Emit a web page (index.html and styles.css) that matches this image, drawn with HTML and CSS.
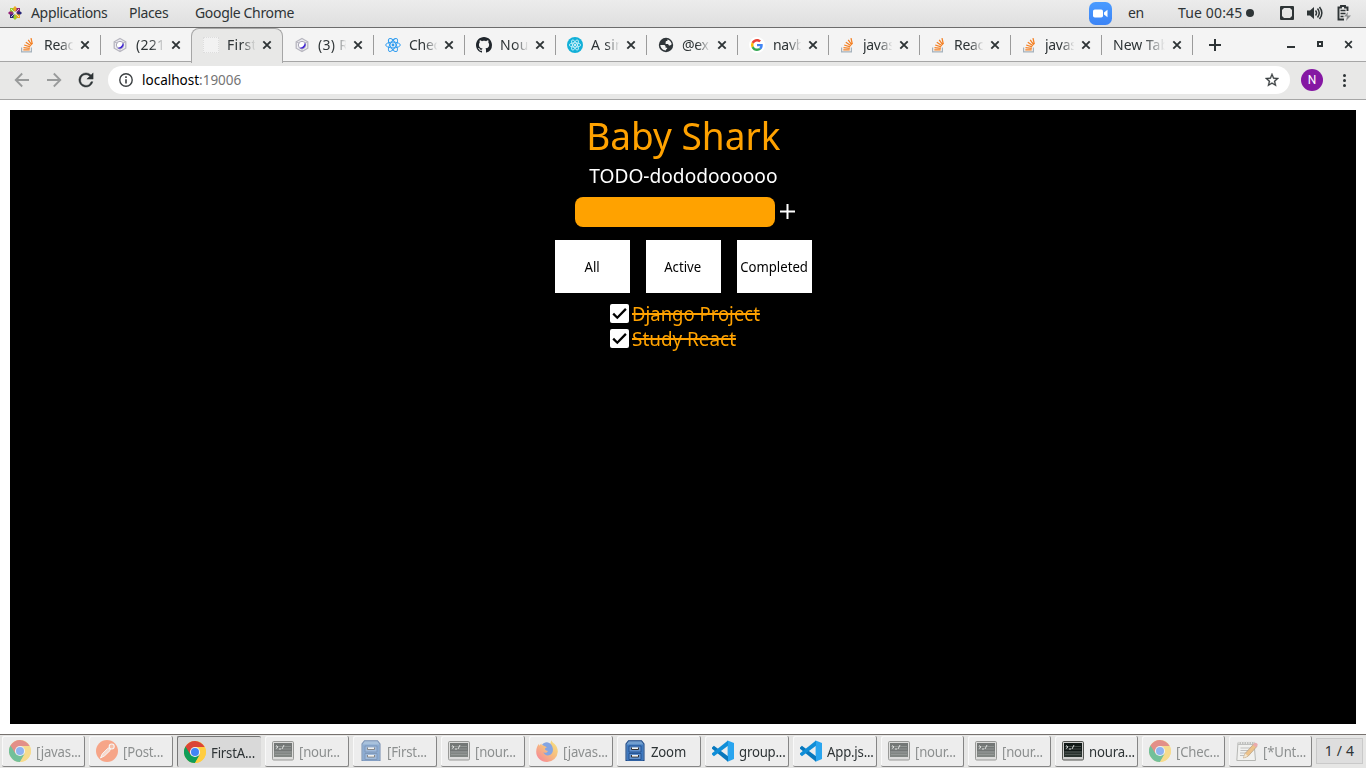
FILE: index.html
```html
<!DOCTYPE html>
<html lang="en">
<head>
<meta charset="utf-8">
<title>FirstApp</title>
<link rel="stylesheet" href="styles.css">
</head>
<body>
<svg class="defs" width="0" height="0">
  <defs>
    <linearGradient id="zoomblue" x2="0" y2="1"><stop offset="0" stop-color="#4a9bff"/><stop offset="1" stop-color="#3c84f6"/></linearGradient>
    <linearGradient id="fox" x1="1" x2="0.1" y1="0" y2="1"><stop offset="0" stop-color="#ffe226"/><stop offset=".5" stop-color="#ff9426"/><stop offset="1" stop-color="#ff2d55"/></linearGradient>
  </defs>
  <symbol id="so" viewBox="0 0 16 16"><path d="M1.600 10.500v4.300h9.800v-4.300" fill="none" stroke="#a5b1bb" stroke-width="1.200"/><path d="M3.300 12.900h6.400M3.500 10.600l6.300.7M4.200 8l6 1.900M5.800 5.200l5.200 3.500M8.200 2.900l3.600 5M11 1.200l1.300 5.900" fill="none" stroke="#f48024" stroke-width="1.300"/></symbol>
  <symbol id="hex" viewBox="0 0 16 16"><path d="M8 1.500l5.800 3.300v6.400L8 14.500l-5.800-3.300V4.800z" fill="#eeeef2" stroke="#b7b6bf" stroke-width="1.300"/><circle cx="8" cy="8" r="3.700" fill="#fff" stroke="#a9a6b8"/><path d="M11 5.600a4 4 0 0 1-5.500 5.400l2.800-.9 1.700-1.800z" fill="#3e22d6"/><path d="M2.500 5l3 1.200M8 14v-2.500M13.500 5l-2.800 1" stroke="#b7b6bf"/></symbol>
  <symbol id="react" viewBox="0 0 16 16"><g fill="none" stroke="currentColor" stroke-width=".95"><ellipse cx="8" cy="8" rx="7.300" ry="2.900"/><ellipse cx="8" cy="8" rx="7.300" ry="2.900" transform="rotate(60 8 8)"/><ellipse cx="8" cy="8" rx="7.300" ry="2.900" transform="rotate(120 8 8)"/></g><circle cx="8" cy="8" r="1.400" fill="currentColor"/></symbol>
  <symbol id="github" viewBox="0 0 16 16"><path fill="#20262c" d="M8 0C3.58 0 0 3.58 0 8c0 3.54 2.29 6.53 5.47 7.59.4.07.55-.17.55-.38 0-.19-.01-.82-.01-1.49-2.01.37-2.53-.49-2.69-.94-.09-.23-.48-.94-.82-1.13-.28-.15-.68-.52-.01-.53.63-.01 1.08.58 1.23.82.72 1.21 1.87.87 2.33.66.07-.52.28-.87.51-1.07-1.78-.2-3.64-.89-3.64-3.95 0-.87.31-1.59.82-2.15-.08-.2-.36-1.02.08-2.12 0 0 .67-.21 2.2.82.64-.18 1.32-.27 2-.27s1.36.09 2 .27c1.53-1.04 2.2-.82 2.2-.82.44 1.1.16 1.92.08 2.12.51.56.82 1.27.82 2.15 0 3.07-1.87 3.75-3.65 3.95.29.25.54.73.54 1.48 0 1.07-.01 1.93-.01 2.2 0 .21.15.46.55.38A8 8 0 0 0 16 8c0-4.42-3.58-8-8-8z"/></symbol>
  <symbol id="reactdisc" viewBox="0 0 16 16"><circle cx="8" cy="8" r="8" fill="#12b0d8"/><g fill="none" stroke="#e4faff" stroke-width=".75"><ellipse cx="8" cy="8" rx="5.700" ry="2.200"/><ellipse cx="8" cy="8" rx="5.700" ry="2.200" transform="rotate(60 8 8)"/><ellipse cx="8" cy="8" rx="5.700" ry="2.200" transform="rotate(120 8 8)"/></g><circle cx="8" cy="8" r="1" fill="#fff"/></symbol>
  <symbol id="globe" viewBox="0 0 16 16"><circle cx="8" cy="8" r="7.200" fill="#30363a"/><path d="M2.300 8.100h3.400c1 0 1.900.7 1.900 1.600v1h1.500v1.400c-.9 0-1.200.6-1.200 1.500-3-.2-5.400-2.500-5.600-5.500zM9.300 2.400c2.200.5 3.900 2.200 4.400 4.600-.3.900-1 1.400-2 1.400-.9 0-1.500-.6-1.500-1.500H7.600V5.400c0-.8.600-1.300 1.300-1.300.5 0 .6-.8.400-1.700z" fill="#f4f4f4"/></symbol>
  <symbol id="google" viewBox="0 0 48 48"><rect width="48" height="48" rx="24" fill="#fff"/><g transform="translate(6 6) scale(.75)"><path fill="#EA4335" d="M24 9.500c3.540 0 6.710 1.220 9.210 3.600l6.850-6.850C35.900 2.380 30.470 0 24 0 14.620 0 6.510 5.380 2.560 13.220l7.980 6.190C12.430 13.720 17.740 9.500 24 9.500z"/><path fill="#4285F4" d="M46.980 24.550c0-1.570-.15-3.090-.38-4.550H24v9.020h12.940c-.58 2.960-2.260 5.480-4.780 7.180l7.730 6c4.510-4.180 7.090-10.360 7.090-17.650z"/><path fill="#FBBC05" d="M10.530 28.590A14.500 14.500 0 0 1 10.530 19.410l-7.980-6.190a24 24 0 0 0 0 21.560z"/><path fill="#34A853" d="M24 48c6.480 0 11.930-2.130 15.890-5.810l-7.730-6c-2.150 1.450-4.920 2.300-8.160 2.300-6.260 0-11.570-4.220-13.470-9.910l-7.980 6.190C6.510 42.620 14.620 48 24 48z"/></g></symbol>
  <symbol id="x" viewBox="0 0 10 10"><path d="M1.300 1.300l7.400 7.400M8.700 1.300l-7.400 7.400" stroke="#2e3436" stroke-width="1.900" fill="none"/></symbol>
  <symbol id="chrome" viewBox="0 0 22 22"><circle cx="11" cy="11" r="11" fill="#ffcd40"/><path d="M11 11L1.470 5.500A11 11 0 0 0 11 22l5-8z" fill="#0f9d58"/><path d="M1.470 5.500A11 11 0 0 1 20.500 5.700V6H11v5l-4.600 2.500z" fill="#db4437"/><path d="M11 6h9.700A11 11 0 0 1 11 22l4.800-8.500z" fill="#ffcd40"/><circle cx="11" cy="11" r="5.100" fill="#f1f1f1"/><circle cx="11" cy="11" r="4" fill="#4285f4"/></symbol>
  <symbol id="postman" viewBox="0 0 22 22"><circle cx="11" cy="11" r="11" fill="#ff6c37"/><path d="M4.500 18l1.800-4.200 5.600-5.600 2.300 2.200-5.500 5.300-4.200 2.300zM12.500 7.500l2.300 2.300" fill="#ffc9b4" stroke="#fff" stroke-width="1"/><circle cx="15.700" cy="6.500" r="2.500" fill="#ff9a73" stroke="#fff" stroke-width="1.100"/></symbol>
  <symbol id="term" viewBox="0 0 22 20"><rect x=".5" y=".5" width="21" height="18.500" rx="1.200" fill="#d0d0cf" stroke="#555753"/><rect x="2" y="2" width="18" height="14" fill="#101816"/><path d="M2 10h18v6H2z" fill="#29322e"/><path d="M3 5.500h16M3 8h16M3 11h16M3 13.500h16" stroke="#5b635f" stroke-width=".7"/><path d="M4 4.500l2 1.500-2 1.500M7 8h2M10 8l2-4" fill="none" stroke="#fff" stroke-width=".8"/></symbol>
  <symbol id="cabinet" viewBox="0 0 20 22"><path d="M3.500.7h13L19 4v16.500H1V4z" fill="#729fcf" stroke="#204a87" stroke-width="1.100"/><path d="M2 4.500h16v16H2z" fill="#3e78bf"/><path d="M4 6h12v6H4zM4 13.500h12v6H4z" fill="#6192ce" stroke="#214f8c" stroke-width=".9"/><path d="M6.500 7.500v2h7v-2M6.500 15v2h7v-2" fill="#d7d7d0" stroke="#333" stroke-width="1"/><path d="M7 8.300h6M7 15.800h6" stroke="#fff" stroke-width="1"/></symbol>
  <symbol id="firefox" viewBox="0 0 22 22"><path d="M15.200.3c1.100 1.900 2 2.500 3.600 4 2 2 3.100 4.600 3 7.500A10.800 10.800 0 0 1 11 22C4.900 22 .2 17.600.2 11.700c0-3.600 1.300-6.200 2.800-7.900l.3 2 2-2.300.5 1.700c4-1 7-.5 8 .6z" fill="url(#fox)"/><path d="M6 4.800C8 1.500 13 1 15.500 5c2.400 3.800 1.700 8-1.100 9.700-3 1.700-6 .3-7.100-2.500 2.400 1.300 4 .3 4.600-1.200-1.400-.3-3-.6-3-2.500l2-1.200z" fill="#306bdb"/></symbol>
  <symbol id="vscode" viewBox="0 0 22 22"><path d="M15.600.4L22 3v16l-6.400 2.700z" fill="#29a5ef"/><path d="M0 7.400l1.900-1.700L16 16.300v5.400L0 8.700z" fill="#0878bd"/><path d="M0 14.600l1.900 1.700L16 5.700V.4L0 13.300z" fill="#108ed8"/></symbol>
  <symbol id="notes" viewBox="0 0 22 22"><path d="M2 2.500h16l1.500 18H.8z" fill="#f5f5f2" stroke="#888a85"/><path d="M2 2h17v3H2z" fill="#9b9c98"/><path d="M3 1v3M5.500 1v3M8 1v3M10.500 1v3M13 1v3M15.500 1v3M18 1v3" stroke="#e3e3e0"/><path d="M4.500 8h11M4.500 10.500h9M4 13h7M4 15.500h4" stroke="#999"/><path d="M7.500 18l1.700-4.600L18 3.700l3 2.600-9 10z" fill="#eda03a" stroke="#92642c" stroke-width=".8"/><path d="M16.900 5L18.600 3q1-.8 2.200.2t.9 2.100l-1.700 1.900z" fill="#e8757a"/><path d="M7.500 18l1.700-4.600 2.800 2.600z" fill="#f7dfb6"/></symbol>
  <symbol id="check" viewBox="0 0 19 19"><rect width="19" height="19" rx="2" fill="#fff"/><path d="M3.200 9.600l4.100 4.100 8.600-8.800" fill="none" stroke="#000" stroke-width="2.300"/></symbol>
</svg>

<header class="panel">
  <svg class="distro" viewBox="0 0 14 14"><path fill="#9ccd2a" d="M2 2h4.400v4.400H2z"/><path fill="#932279" d="M7.600 2H12v4.400H7.600z"/><path fill="#262577" d="M2 7.600h4.400V12H2z"/><path fill="#efa724" d="M7.600 7.600H12V12H7.600zM7 0l1.500 1.500V4L7 5.500 5.500 4V1.500z"/><path fill="#932279" d="M0 7l1.500-1.500H4L5.500 7 4 8.500H1.500z"/><path fill="#9ccd2a" d="M7 14l-1.500-1.500V10L7 8.500 8.500 10v2.500z"/><path fill="#262577" d="M14 7l-1.500 1.500H10L8.500 7 10 5.500h2.500z"/><path stroke="#ededed" stroke-width=".8" d="M3 3l8 8M11 3l-8 8"/></svg>
  <span class="panel-text apps">Applications</span>
  <span class="panel-text places">Places</span>
  <span class="panel-text appname">Google Chrome</span>
  <div class="tray">
    <svg class="zoomicon" viewBox="0 0 23 23"><rect width="23" height="23" rx="6.500" fill="url(#zoomblue)"/><rect x="4" y="7.500" width="10" height="8" rx="1.800" fill="#fff"/><path d="M15 10.500l3.500-2.700v7.400L15 12.500z" fill="#fff"/></svg>
    <span class="panel-text lang">en</span>
    <span class="panel-text clock">Tue 00:45</span>
    <i class="dot"></i>
    <svg class="sys1" viewBox="0 0 14 14"><path d="M1 1h12v12H1z" fill="none" stroke="#2e3436" stroke-width="2" stroke-linejoin="round"/><path d="M2 2h2L2 4zM12 2h-2l2 2zM2 12h2l-2-2zM12 12h-2l2-2z" fill="#2e3436"/></svg>
    <svg class="sys2" viewBox="0 0 16 14"><path d="M0 4.500h3L7 1v12L3 9.500H0z" fill="#2e3436"/><path d="M8.500 4.500q2 2.500 0 5M10.500 2.500q3.500 4.500 0 9M12.500 1q4.700 6 0 12" fill="none" stroke="#2e3436" stroke-width="1.500"/></svg>
    <svg class="sys3" viewBox="0 0 15 16"><path d="M10.500 6V2.500H8V1H4v1.500H1.500v12H7" fill="none" stroke="#2e3436" stroke-width="1.900"/><path d="M3.500 5.500h5M3.500 8.500h5M3.500 11.500h3" stroke="#2e3436" stroke-width="1.700"/><path d="M11 7l-4 4.500h3L9 16l5-5.500h-3.500z" fill="#8b8e8f"/></svg>
  </div>
</header>

<nav class="tabs">
  <div class="tab"><svg class="fav"><use href="#so"/></svg><span>React</span><svg class="close"><use href="#x"/></svg></div>
  <div class="tab nosep"><svg class="fav"><use href="#hex"/></svg><span class="loose">(221)</span><svg class="close"><use href="#x"/></svg></div>
  <div class="tab active"><i class="fav blank"></i><span class="loose">First</span><svg class="close"><use href="#x"/></svg></div>
  <div class="tab"><svg class="fav"><use href="#hex"/></svg><span class="loose">(3) Re</span><svg class="close"><use href="#x"/></svg></div>
  <div class="tab"><svg class="fav blue"><use href="#react"/></svg><span class="mid">Check</span><svg class="close"><use href="#x"/></svg></div>
  <div class="tab"><svg class="fav"><use href="#github"/></svg><span class="loose">Noura</span><svg class="close"><use href="#x"/></svg></div>
  <div class="tab"><svg class="fav"><use href="#reactdisc"/></svg><span class="loose">A sim</span><svg class="close"><use href="#x"/></svg></div>
  <div class="tab"><svg class="fav"><use href="#globe"/></svg><span class="mid">@exp</span><svg class="close"><use href="#x"/></svg></div>
  <div class="tab"><svg class="fav"><use href="#google"/></svg><span class="mid">navba</span><svg class="close"><use href="#x"/></svg></div>
  <div class="tab"><svg class="fav"><use href="#so"/></svg><span>javasc</span><svg class="close"><use href="#x"/></svg></div>
  <div class="tab"><svg class="fav"><use href="#so"/></svg><span>React</span><svg class="close"><use href="#x"/></svg></div>
  <div class="tab"><svg class="fav"><use href="#so"/></svg><span>javasc</span><svg class="close"><use href="#x"/></svg></div>
  <div class="tab"><span class="wide">New Tab</span><svg class="close"><use href="#x"/></svg></div>
  <svg class="newtab" viewBox="0 0 12 12"><path d="M6 0v12M0 6h12" stroke="#2e3436" stroke-width="2"/></svg>
  <div class="window-controls"><i class="min"></i><i class="max"></i><svg class="wclose"><use href="#x"/></svg></div>
</nav>

<div class="toolbar">
  <svg class="nav-btn off" viewBox="0 0 16 16"><path d="M15 8H2M8.200 1.500L1.700 8l6.500 6.500" fill="none" stroke="currentColor" stroke-width="1.800"/></svg>
  <svg class="nav-btn off" viewBox="0 0 16 16"><path d="M1 8h13M7.800 1.500L14.300 8l-6.500 6.500" fill="none" stroke="currentColor" stroke-width="1.800"/></svg>
  <svg class="nav-btn" viewBox="3 3 18 18"><path fill="currentColor" stroke="currentColor" stroke-width=".5" d="M17.650 6.350A7.960 7.960 0 0 0 12 4a8 8 0 1 0 7.730 10h-2.080A6 6 0 1 1 12 6c1.660 0 3.140.69 4.220 1.780L13 11h7V4z"/></svg>
  <div class="omnibox">
    <svg class="info" viewBox="0 0 14 14"><circle cx="7" cy="7" r="6.200" fill="none" stroke="#3c4043" stroke-width="1.400"/><path d="M7 6.200v4.300M7 3.300v1.600" stroke="#3c4043" stroke-width="1.600"/></svg>
    <span class="url"><b>localhost</b>:19006</span>
    <svg class="star" viewBox="2 2 20 20"><path fill="#3c4043" stroke="#3c4043" stroke-width=".4" d="M22 9.240l-7.190-.62L12 2 9.190 8.630 2 9.240l5.460 4.730L5.820 21 12 17.270 18.180 21l-1.630-7.030zM12 15.400l-3.760 2.270 1-4.280-3.320-2.880 4.380-.38L12 6.100l1.710 4.040 4.380.38-3.320 2.880 1 4.280z"/></svg>
  </div>
  <span class="avatar">N</span>
  <span class="menu"><i></i><i></i><i></i></span>
</div>

<main class="page">
  <section class="app">
    <h1>Baby Shark</h1>
    <h2>TODO-dododoooooo</h2>
    <div class="entry"><div class="input"></div><svg viewBox="0 0 15 15"><path d="M7.500 0v15M0 7.500h15" stroke="#fff" stroke-width="2"/></svg></div>
    <div class="filters"><div><span>All</span></div><div><span>Active</span></div><div><span>Completed</span></div></div>
    <ul class="todos">
      <li><svg><use href="#check"/></svg><s class="t1">Django Project</s></li>
      <li><svg><use href="#check"/></svg><s class="t2">Study React</s></li>
    </ul>
  </section>
</main>

<footer class="taskbar">
  <div class="tasks">
    <div class="task dim"><svg><use href="#chrome"/></svg><span>[javas...</span></div>
    <div class="task dim"><svg><use href="#postman"/></svg><span>[Post...</span></div>
    <div class="task current"><svg><use href="#chrome"/></svg><span>FirstA...</span></div>
    <div class="task dim"><svg><use href="#term"/></svg><span>[nour...</span></div>
    <div class="task dim"><svg><use href="#cabinet"/></svg><span>[First...</span></div>
    <div class="task dim"><svg><use href="#term"/></svg><span>[nour...</span></div>
    <div class="task dim"><svg><use href="#firefox"/></svg><span>[javas...</span></div>
    <div class="task"><svg><use href="#cabinet"/></svg><span>Zoom</span></div>
    <div class="task"><svg><use href="#vscode"/></svg><span>group...</span></div>
    <div class="task"><svg><use href="#vscode"/></svg><span>App.js...</span></div>
    <div class="task dim"><svg><use href="#term"/></svg><span>[nour...</span></div>
    <div class="task dim"><svg><use href="#term"/></svg><span>[nour...</span></div>
    <div class="task"><svg><use href="#term"/></svg><span>noura...</span></div>
    <div class="task dim"><svg><use href="#chrome"/></svg><span>[Chec...</span></div>
    <div class="task dim"><svg><use href="#notes"/></svg><span>[*Unt...</span></div>
  </div>
  <div class="pager">1 / 4</div>
</footer>
</body>
</html>
```
FILE: styles.css
```css
* { box-sizing: border-box; }
body { margin: 0; width: 1366px; height: 768px; overflow: hidden; display: flex; flex-direction: column; background: #fff; color: #2e3436; font: 14px/20px "Noto Sans", sans-serif; }
svg { display: block; flex: none; }
.defs { position: absolute; }
span { white-space: nowrap; }
i { flex: none; }

.panel { height: 28px; flex: none; display: flex; align-items: center; padding: 0 0 1px 8px; background: linear-gradient(#ececec, #dfdfdf); border-bottom: 1px solid #6c6c6c; }
.distro { width: 14px; height: 14px; }
.panel-text { flex: none; letter-spacing: -.33px; }
.apps { margin-left: 9px; width: 98px; }
.places { width: 66px; }
.tray { margin-left: auto; display: flex; align-items: center; width: 277px; }
.zoomicon { width: 23px; height: 23px; }
.lang { margin-left: 16px; width: 50px; }
.clock { width: 67px; letter-spacing: .15px; }
.dot { width: 8px; height: 8px; border-radius: 50%; background: #2e3436; margin-left: 1px; }
.sys1 { width: 14px; height: 14px; margin-left: 26px; }
.sys2 { width: 16px; height: 14px; margin-left: 13px; }
.sys3 { width: 15px; height: 16px; margin-left: 14px; }

.tabs { height: 34px; flex: none; display: flex; align-items: center; padding-left: 10px; background: #f4f4f4; border-bottom: 1px solid #a6a6a6; }
.tab { position: relative; width: 91px; height: 34px; flex: none; display: flex; align-items: center; padding-left: 10px; }
.tab::after { content: ""; position: absolute; right: 0; top: 7px; width: 1px; height: 20px; background: #9b9b9b; }
.tab.active::after, .tab.nosep::after { display: none; }
.tab.active { margin: 1px 0 0 -1px; width: 92px; height: 35px; padding: 0 0 2px 11px; background: #e8e8e7; border: 1px solid #a6a6a6; border-bottom: 0; border-radius: 8px 8px 0 0; z-index: 1; }
.fav { width: 16px; height: 16px; margin-right: 8px; }
.tab.active .fav { margin-right: 7px; }
.tab:nth-child(n+2) { padding-left: 11px; }
.tab:nth-child(n+2) .fav { margin-right: 7px; }
.fav.blue { color: #2f9cf0; }
.fav.blank { background: #f2f2f2; border: 1px dotted #ddd; }
.tab span { width: 29px; overflow: hidden; letter-spacing: -.3px; -webkit-mask-image: linear-gradient(90deg, #000 55%, transparent 102%); mask-image: linear-gradient(90deg, #000 55%, transparent 102%); }
.tab span.loose { letter-spacing: .3px; text-indent: 1px; }
.tab span.mid { text-indent: 1px; }
.tab span.wide { width: 52px; letter-spacing: 0; -webkit-mask-image: linear-gradient(90deg, #000 60%, transparent 100%); mask-image: linear-gradient(90deg, #000 60%, transparent 100%); }
.close { width: 10px; height: 10px; margin-left: 7px; }
.newtab { width: 12px; height: 12px; margin-left: 16px; }
.window-controls { margin-left: auto; display: flex; align-items: center; padding-right: 13px; }
.min { width: 8px; height: 2px; background: #2e3436; margin: 5px 22px 0 0; }
.max { width: 6px; height: 6px; border: 2px solid #2e3436; margin: 0 21px 2px 0; }
.wclose { width: 9px; height: 9px; margin-bottom: 1px; }

.toolbar { height: 38px; flex: none; display: flex; align-items: center; padding: 0 0 1px 14px; background: #e8e8e7; border-bottom: 1px solid #a6a6a6; }
.nav-btn { width: 16px; height: 16px; margin-right: 16px; }
.nav-btn.off { color: #999b9b; }
.nav-btn + .omnibox { margin-left: -2px; }
.omnibox { width: 1182px; height: 28px; border-radius: 14px; background: #fff; display: flex; align-items: center; padding: 0 11px; }
.info { width: 14px; height: 14px; margin-right: 9px; }
.url { color: #757575; font-size: 13.500px; }
.url b { font-weight: 400; color: #000; }
.star { width: 14px; height: 14px; margin-left: auto; }
.avatar { width: 22px; height: 22px; margin-left: 11px; border-radius: 50%; background: #8517a3; color: #fff; font: 12px/22px Roboto, sans-serif; text-align: center; }
.menu { margin-left: 20px; display: flex; flex-direction: column; gap: 2px; }
.menu i { width: 3px; height: 3px; border-radius: 50%; background: #2e3436; }

.page { flex: 1; padding: 10px; }
.app { height: 614px; background: #000; display: flex; flex-direction: column; align-items: center; }
h1, h2 { margin: 0; font-weight: 400; }
h1 { height: 51px; font-size: 39px; line-height: 50px; color: #ffa200; transform: scaleX(.948); }
h2 { height: 29px; font-size: 20px; line-height: 30px; color: #fff; transform: scaleX(.957); }
.entry { margin-top: 7px; display: flex; align-items: center; gap: 5px; padding-left: 4px; }
.input { width: 200px; height: 30px; border-radius: 8px; background: #ffa200; }
.entry svg { width: 15px; height: 15px; margin-bottom: 1px; }
.filters { margin-top: 13px; display: flex; gap: 16px; }
.filters div { width: 75px; height: 53px; background: #fff; color: #000; display: flex; align-items: center; justify-content: center; }
.filters span { transform: scaleX(.94); }
.todos { list-style: none; margin: 8px 0 0 3px; padding: 0; width: 150px; }
.todos li { height: 25px; display: flex; align-items: center; gap: 3px; font-size: 20px; line-height: 25px; color: #ffa200; white-space: nowrap; }
.todos svg { width: 19px; height: 19px; margin-bottom: 1px; }
.todos s { text-decoration-thickness: 2px; transform: scaleX(.925); transform-origin: left; }
.todos .t2 { transform: scaleX(.945); }

.taskbar { height: 34px; flex: none; display: flex; background: #e6e6e5; border-top: 1px solid #77726f; padding: 1px 3px 1px 2px; }
.tasks { display: grid; grid-template-columns: 83px repeat(9, 84px) repeat(5, 83px); column-gap: 4px; }
.task { min-width: 0; display: flex; align-items: center; padding-left: 7px; background: #ededed; border: solid #858585; border-width: 0 1px 1px 0; border-radius: 2px; box-shadow: inset 1px 1px #f9f9f9; }
.task svg { width: 22px; height: 22px; margin-right: 5px; }
.task span { transform: scaleX(.94); transform-origin: left; letter-spacing: -.2px; padding-top: 2px; }
.task.dim svg { opacity: .55; }
.task.dim span { color: #8d9090; }
.task.current { padding: 0 0 0 6px; background: #d9d9d9; border: solid #777; border-width: 1px 0 0 1px; box-shadow: none; }
.pager { margin: 2px 0 3px 4px; width: 47px; border: 1px solid #c9c9c9; background: #dedede; display: flex; align-items: center; justify-content: center; letter-spacing: .2px; }
```
